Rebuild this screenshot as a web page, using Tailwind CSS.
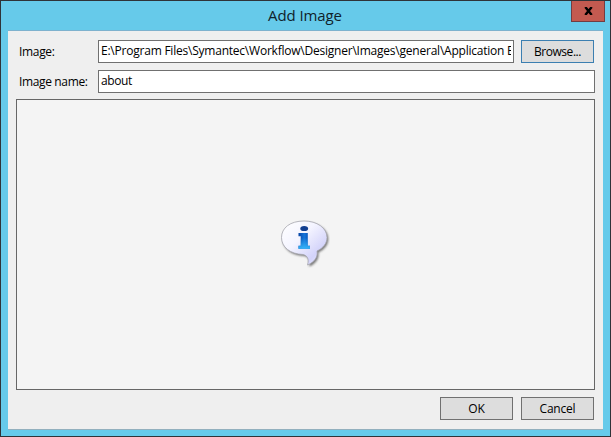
<!DOCTYPE html>
<html lang="en">
<head>
<meta charset="utf-8">
<title>Add Image</title>
<script src="https://cdn.jsdelivr.net/npm/@tailwindcss/browser@4"></script>
</head>
<body class="w-[611px] h-[437px] overflow-hidden font-['Open_Sans','Noto_Sans',sans-serif] text-[12px] leading-4 text-black">
<div class="flex h-full flex-col border border-[#2f3338] bg-[#66caea] px-[7px] pb-[6px]">
  <header class="grid h-[29px] shrink-0 grid-cols-[1fr_auto_1fr]">
    <span></span>
    <h1 class="pt-[4px] pr-[1px] text-[15px] leading-5 tracking-[-0.1px] text-[#10222a]">Add Image</h1>
    <button aria-label="Close" class="-mr-[2px] flex h-[21px] w-[34px] items-center justify-center justify-self-end border border-t-0 border-[#733c42] bg-[#c35a50]">
      <svg class="h-2 w-[9px]" viewBox="0 0 9 8"><path d="M1.300 0L7.700 8M7.700 0L1.300 8" stroke="#000" stroke-width="2.400"/></svg>
    </button>
  </header>
  <main class="flex min-h-0 flex-1 flex-col border-y border-t-[#7eb2ce] border-b-[#93b0be] bg-[#efefef] pt-[9px] pr-2 pb-[9px] pl-2">
    <div class="flex h-[23px] shrink-0">
      <label class="w-[82px] pt-1 pl-[3px] tracking-[-0.32px]">Image:</label>
      <div class="w-[416px] border border-[#707070] bg-white pt-[2px] px-[2px]"><div class="overflow-hidden whitespace-nowrap tracking-[-0.225px]">E:\Program Files\Symantec\Workflow\Designer\Images\general\Application E</div></div>
      <button class="ml-[7px] w-[73px] border border-[#3c7fb1] bg-[#dddddd] tracking-[-0.45px]">Browse...</button>
    </div>
    <div class="mt-[7px] flex h-[23px] shrink-0">
      <label class="w-[82px] pt-1 pl-[3px] tracking-[-0.36px]">Image name:</label>
      <div class="w-[497px] border border-[#707070] bg-white px-[2px] pt-[2px] tracking-[-0.4px]">about</div>
    </div>
    <div class="mt-[6px] flex h-[291px] w-[579px] shrink-0 items-center justify-center border border-[#666] bg-[#f4f4f4] pr-1 pb-1">
      <svg class="h-[52px] w-[52px]" viewBox="0 0 52 52">
        <defs>
          <linearGradient id="bubble" x1="0" y1="0" x2="1" y2="1"><stop offset="0" stop-color="#fff"/><stop offset=".4" stop-color="#f4f4ff"/><stop offset=".75" stop-color="#d3d3fa"/><stop offset="1" stop-color="#f5f5ff"/></linearGradient>
          <linearGradient id="stem" x1="0" y1="0" x2="1" y2="0"><stop offset="0" stop-color="#0644a4"/><stop offset=".5" stop-color="#1674da"/><stop offset="1" stop-color="#084cad"/></linearGradient>
          <linearGradient id="base" x1="0" y1="0" x2="0" y2="1"><stop offset=".3" stop-color="#35b5fa" stop-opacity="0"/><stop offset="1" stop-color="#35b5fa"/></linearGradient>
          <filter id="soft" x="-20%" y="-20%" width="150%" height="150%"><feGaussianBlur stdDeviation=".8"/></filter>
        </defs>
        <path d="M26 4C12 4 3.500 11 3.500 20.500C3.500 30 12 37 25 37.500C29 38.500 31.500 41.500 29.500 48C37 45 40 39.500 39 34C45.500 31 49 26 49 20.500C49 11 39 4 26 4Z" transform="translate(1.300 1.600)" fill="#555" opacity=".8" filter="url(#soft)"/>
        <path d="M26 4C12 4 3.500 11 3.500 20.500C3.500 30 12 37 25 37.500C29 38.500 31.500 41.500 29.500 48C37 45 40 39.500 39 34C45.500 31 49 26 49 20.500C49 11 39 4 26 4Z" fill="url(#bubble)" stroke="#a6a6ae" stroke-width=".8"/>
        <ellipse cx="26.200" cy="11.500" rx="3.900" ry="2.600" fill="#123f91"/>
        <path d="M20.500 16H29.800V28.700H32V31.800H20.500V28.700H22.700V19.200H20.500Z" fill="url(#stem)"/>
        <path d="M20.500 16H29.800V28.700H32V31.800H20.500V28.700H22.700V19.200H20.500Z" fill="url(#base)"/>
      </svg>
    </div>
    <div class="mt-[7px] flex h-[23px] shrink-0 justify-end gap-2 pr-[1px]">
      <button class="w-[73px] border border-[#707070] bg-[#dddddd] tracking-[-0.2px]">OK</button>
      <button class="w-[73px] border border-[#707070] bg-[#dddddd] tracking-[-0.2px]">Cancel</button>
    </div>
  </main>
</div>
</body>
</html>
